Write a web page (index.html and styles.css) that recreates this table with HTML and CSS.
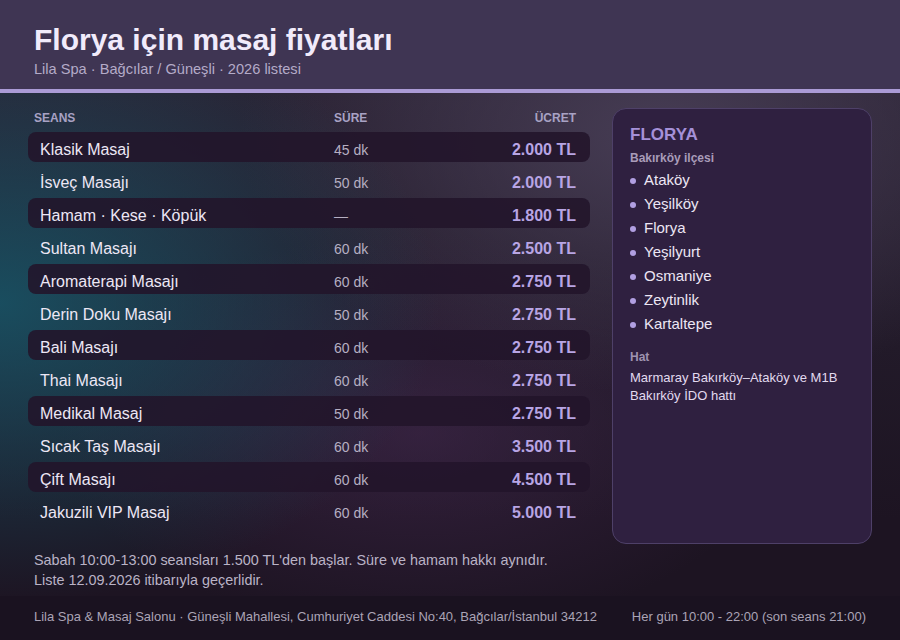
FILE: index.html
```html
<!DOCTYPE html>
<html lang="tr">
<head>
<meta charset="utf-8">
<title>Florya için masaj fiyatları</title>
<link rel="stylesheet" href="styles.css">
</head>
<body>
<div class="page">
  <header class="header">
    <h1 class="title">Florya için masaj fiyatları</h1>
    <p class="subtitle">Lila Spa · Bağcılar / Güneşli · 2026 listesi</p>
  </header>
  <div class="body">
    <main class="main">
      <section class="prices">
        <div class="thead">
          <span>SEANS</span><span>SÜRE</span><span class="right">ÜCRET</span>
        </div>
        <div class="row alt"><span class="name">Klasik Masaj</span><span class="dur">45 dk</span><span class="price">2.000 TL</span></div>
        <div class="row"><span class="name">İsveç Masajı</span><span class="dur">50 dk</span><span class="price">2.000 TL</span></div>
        <div class="row alt"><span class="name">Hamam · Kese · Köpük</span><span class="dur">—</span><span class="price">1.800 TL</span></div>
        <div class="row"><span class="name">Sultan Masajı</span><span class="dur">60 dk</span><span class="price">2.500 TL</span></div>
        <div class="row alt"><span class="name">Aromaterapi Masajı</span><span class="dur">60 dk</span><span class="price">2.750 TL</span></div>
        <div class="row"><span class="name">Derin Doku Masajı</span><span class="dur">50 dk</span><span class="price">2.750 TL</span></div>
        <div class="row alt"><span class="name">Bali Masajı</span><span class="dur">60 dk</span><span class="price">2.750 TL</span></div>
        <div class="row"><span class="name">Thai Masajı</span><span class="dur">60 dk</span><span class="price">2.750 TL</span></div>
        <div class="row alt"><span class="name">Medikal Masaj</span><span class="dur">50 dk</span><span class="price">2.750 TL</span></div>
        <div class="row"><span class="name">Sıcak Taş Masajı</span><span class="dur">60 dk</span><span class="price">3.500 TL</span></div>
        <div class="row alt"><span class="name">Çift Masajı</span><span class="dur">60 dk</span><span class="price">4.500 TL</span></div>
        <div class="row"><span class="name">Jakuzili VIP Masaj</span><span class="dur">60 dk</span><span class="price">5.000 TL</span></div>
      </section>
      <aside class="panel">
        <h2 class="panel-title">FLORYA</h2>
        <p class="panel-sub">Bakırköy ilçesi</p>
        <ul class="areas">
          <li>Ataköy</li>
          <li>Yeşilköy</li>
          <li>Florya</li>
          <li>Yeşilyurt</li>
          <li>Osmaniye</li>
          <li>Zeytinlik</li>
          <li>Kartaltepe</li>
        </ul>
        <p class="panel-label">Hat</p>
        <p class="panel-text">Marmaray Bakırköy–Ataköy ve M1B Bakırköy İDO hattı</p>
      </aside>
    </main>
    <div class="notes">
      <p>Sabah 10:00-13:00 seansları 1.500 TL'den başlar. Süre ve hamam hakkı aynıdır.</p>
      <p>Liste 12.09.2026 itibarıyla geçerlidir.</p>
    </div>
  </div>
  <footer class="footer">
    <span>Lila Spa &amp; Masaj Salonu · Güneşli Mahallesi, Cumhuriyet Caddesi No:40, Bağcılar/İstanbul 34212</span>
    <span>Her gün 10:00 - 22:00 (son seans 21:00)</span>
  </footer>
</div>
</body>
</html>
```

FILE: styles.css
```css
* { box-sizing: border-box; }
html, body { margin: 0; padding: 0; }
body {
  width: 900px;
  height: 640px;
  overflow: hidden;
  font-family: "Liberation Sans", Arial, sans-serif;
  background: #1b1320;
}
p, h1, h2, ul { margin: 0; padding: 0; }

.page { width: 900px; height: 640px; display: flex; flex-direction: column; }

.header {
  background: #3f3553;
  padding: 22px 34px 10px;
  border-bottom: 4px solid #ab9bd6;
  height: 93px;
}
.title {
  font-size: 30px;
  line-height: 36px;
  font-weight: bold;
  color: #f1ebfb;
}
.subtitle {
  margin-top: 1px;
  font-size: 14.6px;
  line-height: 20px;
  color: #b4abc8;
}

.body {
  flex: 1;
  background:
    radial-gradient(ellipse 440px 300px at 0px 210px, rgba(24, 84, 102, 0.88), rgba(24, 84, 102, 0)),
    radial-gradient(ellipse 420px 260px at 660px 40px, rgba(72, 62, 86, 0.95), rgba(72, 62, 86, 0)),
    radial-gradient(ellipse 360px 200px at 420px 340px, rgba(78, 46, 92, 0.45), rgba(78, 46, 92, 0)),
    linear-gradient(180deg, #2a2233 0%, #221a29 50%, #1d1422 85%);
}

.main {
  display: flex;
  gap: 22px;
  padding: 15px 28px 0;
}

.prices { width: 562px; }

.thead {
  display: grid;
  grid-template-columns: 300px 1fr auto;
  padding: 3px 14px 0 6px;
  height: 24px;
  font-size: 12px;
  line-height: 14px;
  font-weight: bold;
  color: #a8a2c4;
}
.right { text-align: right; }

.row {
  display: grid;
  grid-template-columns: 294px 1fr auto;
  align-items: center;
  height: 30px;
  margin-bottom: 3px;
  padding: 6px 14px 0 12px;
  border-radius: 8px;
}
.row.alt { background: rgba(34, 20, 42, 0.88); }
.name { font-size: 16px; color: #ede7f5; }
.dur { font-size: 14px; color: #b6afc2; }
.price { font-size: 16px; font-weight: bold; color: #b8a5e4; text-align: right; }

.panel {
  width: 260px;
  height: 436px;
  background: #2f2040;
  border: 1px solid #4e4068;
  border-radius: 14px;
  padding: 16px 17px;
}
.panel-title {
  font-size: 17px;
  line-height: 20px;
  font-weight: bold;
  color: #a590d8;
}
.panel-sub {
  margin-top: 5px;
  font-size: 12px;
  line-height: 16px;
  font-weight: bold;
  color: #a99cb9;
}
.areas { list-style: none; margin-top: 2px; }
.areas li {
  display: flex;
  align-items: center;
  gap: 8px;
  font-size: 15px;
  line-height: 24px;
  color: #ece6f4;
}
.areas li::before {
  content: "";
  width: 6px;
  height: 6px;
  border-radius: 50%;
  background: #b19fe2;
  flex: none;
  margin-top: 2px;
}
.panel-label {
  margin-top: 13px;
  font-size: 12px;
  line-height: 16px;
  font-weight: bold;
  color: #9f93b0;
}
.panel-text {
  margin-top: 4px;
  font-size: 13px;
  line-height: 18px;
  color: #e2daef;
}

.notes {
  padding: 6px 34px 0;
  font-size: 14.4px;
  line-height: 20px;
  color: #bab3c6;
}

.footer {
  height: 44px;
  display: flex;
  justify-content: space-between;
  align-items: center;
  padding: 0 34px 3px;
  background: #1a1220;
  font-size: 13px;
  color: #aba4b6;
}
```
